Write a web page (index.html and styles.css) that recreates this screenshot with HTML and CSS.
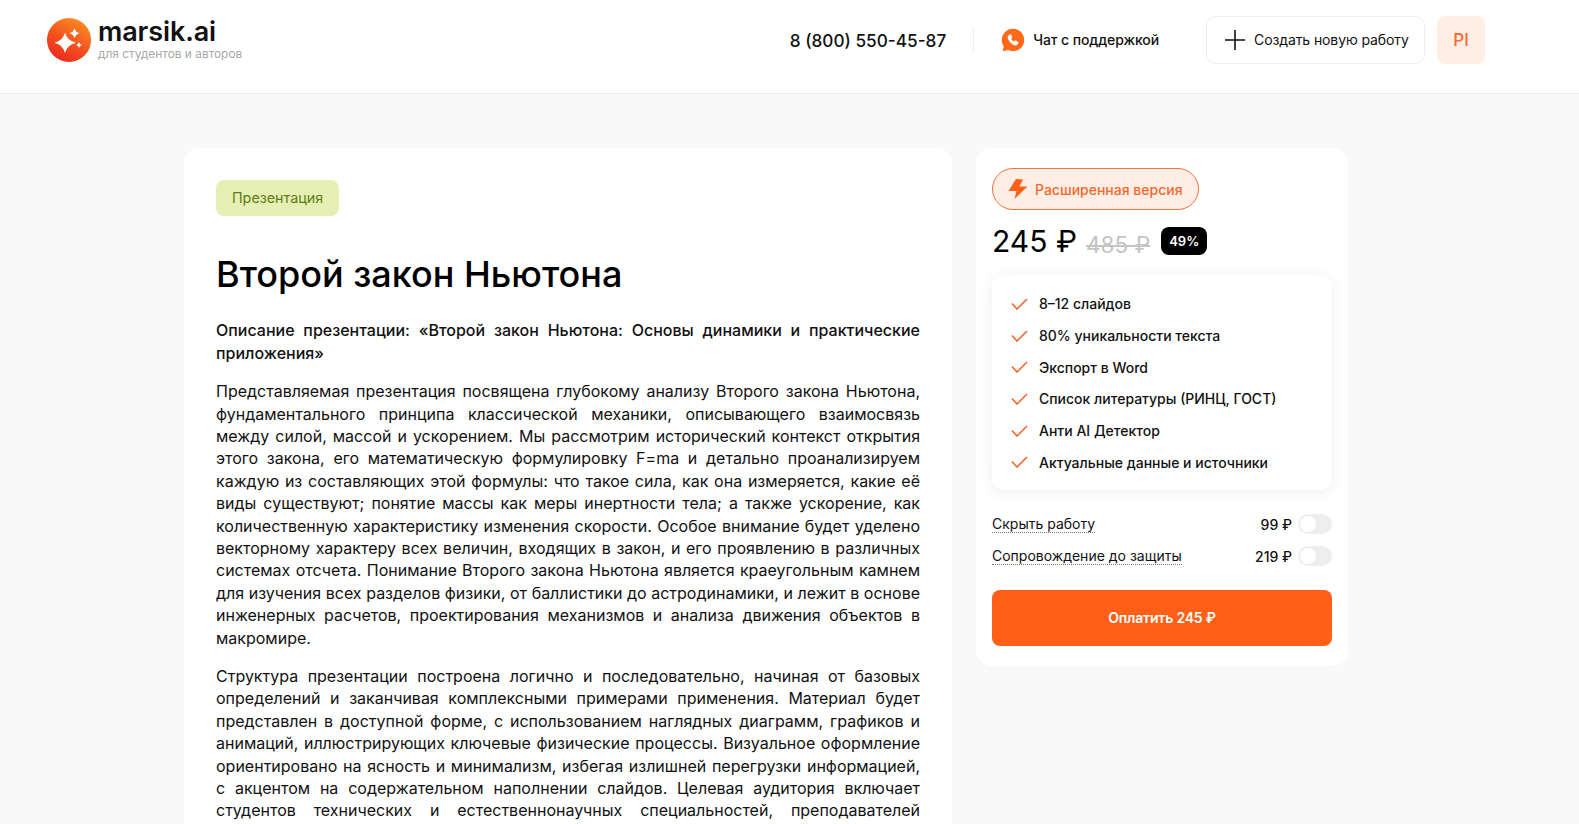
FILE: index.html
```html
<!DOCTYPE html>
<html lang="ru">
<head>
    <meta charset="UTF-8">
    <meta name="viewport" content="width=device-width, initial-scale=1.0">
    <title>Второй закон Ньютона</title>
    <link rel="stylesheet" href="styles.css">
</head>
<body>
    <!-- Header -->
    <header class="header">
        <a class="logo">
            <svg class="logo-icon" viewBox="0 0 44 44">
                <defs>
                    <linearGradient id="logoGrad" x1="0.75" y1="0.05" x2="0.25" y2="0.95">
                        <stop offset="0" stop-color="#fb8a22"/>
                        <stop offset="0.55" stop-color="#f4501f"/>
                        <stop offset="1" stop-color="#ec2a20"/>
                    </linearGradient>
                </defs>
                <circle cx="22" cy="22" r="22" fill="url(#logoGrad)"/>
                <path d="M18 14.500Q20 22.700 29 24.700Q20 26.700 18 35Q16 26.700 7.500 24.700Q16 22.700 18 14.500Z" fill="#fff"/>
                <path d="M27.500 10Q28.500 14.300 32.500 15.300Q28.500 16.300 27.500 20.500Q26.500 16.300 22.500 15.300Q26.500 14.300 27.500 10Z" fill="#fff"/>
                <path d="M32 24Q32.500 26.500 35 27Q32.500 27.500 32 30Q31.500 27.500 29 27Q31.500 26.500 32 24Z" fill="#fff"/>
            </svg>
            <div class="logo-text">
                <div class="logo-name">marsik.ai</div>
                <div class="logo-sub">для студентов и авторов</div>
            </div>
        </a>
        <div class="header-right">
            <a class="phone">8 (800) 550-45-87</a>
            <div class="divider"></div>
            <a class="support">
                <svg class="support-icon" viewBox="0 0 24 24">
                    <path d="M12 .8C5.700.8.800 5.700.800 12c0 2.300.700 4.400 1.900 6.200L1.700 23.300l5.300-1.200c1.500.700 3.200 1.100 5 1.100 6.300 0 11.200-4.900 11.200-11.200S18.300.800 12 .800Z" fill="#ff6a1a"/>
                    <path d="M9.100 6.300 7.500 7.400c-.800.600-1 1.500-.700 2.500.900 3.300 3.600 6.300 7 7.500 1 .300 1.900 0 2.500-.800l1-1.400c.300-.400.200-.900-.200-1.200l-2-1.300c-.400-.200-.800-.200-1.100.100l-.800.800c-1.300-.600-2.500-1.800-3.100-3.100l.8-.900c.300-.300.300-.700.100-1.100L10.300 6.600c-.300-.500-.800-.600-1.200-.300Z" fill="#fff"/>
                </svg>
                Чат с поддержкой
            </a>
            <a class="new-work">
                <svg class="plus-icon" viewBox="0 0 20 20"><path d="M10 0v20M0 10h20" stroke="#111" stroke-width="1.600" fill="none"/></svg>
                Создать новую работу
            </a>
            <div class="avatar">PI</div>
        </div>
    </header>

    <!-- Page -->
    <main class="page">
        <article class="work-card">
            <span class="work-type">Презентация</span>
            <h1 class="work-title">Второй закон Ньютона</h1>
            <p class="lead">Описание презентации: «Второй закон Ньютона: Основы динамики и практические приложения»</p>
            <p>Представляемая презентация посвящена глубокому анализу Второго закона Ньютона, фундаментального принципа классической механики, описывающего взаимосвязь между силой, массой и ускорением. Мы рассмотрим исторический контекст открытия этого закона, его математическую формулировку F=ma и детально проанализируем каждую из составляющих этой формулы: что такое сила, как она измеряется, какие её виды существуют; понятие массы как меры инертности тела; а также ускорение, как количественную характеристику изменения скорости. Особое внимание будет уделено векторному характеру всех величин, входящих в закон, и его проявлению в различных системах отсчета. Понимание Второго закона Ньютона является краеугольным камнем для изучения всех разделов физики, от баллистики до астродинамики, и лежит в основе инженерных расчетов, проектирования механизмов и анализа движения объектов в макромире.</p>
            <p class="cut">Структура презентации построена логично и последовательно, начиная от базовых определений и заканчивая комплексными примерами применения. Материал будет представлен в доступной форме, с использованием наглядных диаграмм, графиков и анимаций, иллюстрирующих ключевые физические процессы. Визуальное оформление ориентировано на ясность и минимализм, избегая излишней перегрузки информацией, с акцентом на содержательном наполнении слайдов. Целевая аудитория включает студентов технических и естественнонаучных специальностей, преподавателей</p>
        </article>

        <aside class="order-card">
            <div class="version">
                <svg class="bolt-icon" viewBox="0 0 20 20"><path d="M8 0 .5 12H8.500L6.500 20 19.500 7.500H11.500L15 .5Z" fill="#ff5f17"/></svg>
                Расширенная версия
            </div>
            <div class="price-row">
                <span class="price">245 ₽</span>
                <span class="price-old">485 ₽</span>
                <span class="discount">49%</span>
            </div>
            <ul class="features">
                <li><svg class="check-icon" viewBox="0 0 17 12"><path d="M1 5.500 6 11 16 1" stroke="#f4682c" stroke-width="1.600" fill="none"/></svg>8–12 слайдов</li>
                <li><svg class="check-icon" viewBox="0 0 17 12"><path d="M1 5.500 6 11 16 1" stroke="#f4682c" stroke-width="1.600" fill="none"/></svg>80% уникальности текста</li>
                <li><svg class="check-icon" viewBox="0 0 17 12"><path d="M1 5.500 6 11 16 1" stroke="#f4682c" stroke-width="1.600" fill="none"/></svg>Экспорт в Word</li>
                <li><svg class="check-icon" viewBox="0 0 17 12"><path d="M1 5.500 6 11 16 1" stroke="#f4682c" stroke-width="1.600" fill="none"/></svg>Список литературы (РИНЦ, ГОСТ)</li>
                <li><svg class="check-icon" viewBox="0 0 17 12"><path d="M1 5.500 6 11 16 1" stroke="#f4682c" stroke-width="1.600" fill="none"/></svg>Анти AI Детектор</li>
                <li><svg class="check-icon" viewBox="0 0 17 12"><path d="M1 5.500 6 11 16 1" stroke="#f4682c" stroke-width="1.600" fill="none"/></svg>Актуальные данные и источники</li>
            </ul>
            <div class="option">
                <span class="option-name">Скрыть работу</span>
                <span class="option-price">99 ₽</span>
                <span class="switch"></span>
            </div>
            <div class="option">
                <span class="option-name">Сопровождение до защиты</span>
                <span class="option-price">219 ₽</span>
                <span class="switch"></span>
            </div>
            <button class="pay-btn">Оплатить 245 ₽</button>
        </aside>
    </main>
</body>
</html>
```

FILE: styles.css
```css
* {
    margin: 0;
    padding: 0;
    box-sizing: border-box;
}

body {
    height: 100vh;
    overflow: hidden;
    background: #f9f9f9;
    font-family: 'Inter', 'Liberation Sans', sans-serif;
    color: #111;
}

/* Header */
.header {
    height: 94px;
    background: #fff;
    border-bottom: 1px solid #ebebeb;
    display: flex;
    align-items: flex-start;
    padding: 16px 94px 0 47px;
}

.logo {
    display: flex;
    align-items: center;
    gap: 7px;
    margin-top: 2px;
}

.logo-icon {
    width: 44px;
    height: 44px;
}

.logo-text {
    margin-top: -2px;
}

.logo-name {
    font-size: 27px;
    font-weight: 600;
    line-height: 28px;
    letter-spacing: -0.1px;
}

.logo-sub {
    font-size: 11.900px;
    line-height: 14px;
    margin-top: 1px;
    color: #a9a9a9;
}

.header-right {
    margin-left: auto;
    display: flex;
    align-items: center;
}

.phone {
    font-size: 17.200px;
    font-weight: 500;
}

.divider {
    width: 1px;
    height: 24px;
    background: #eee;
    margin: 0 27px;
}

.support {
    display: flex;
    align-items: center;
    gap: 8px;
    padding-bottom: 1px;
    font-size: 14px;
    font-weight: 500;
    letter-spacing: -0.1px;
}

.support-icon {
    width: 24px;
    height: 24px;
}

.new-work {
    margin-left: 47px;
    width: 219px;
    height: 48px;
    padding: 0 0 1px 18px;
    border: 1px solid #eee;
    border-radius: 10px;
    display: flex;
    align-items: center;
    gap: 9px;
    font-size: 14px;
    letter-spacing: -0.1px;
}

.plus-icon {
    width: 20px;
    height: 20px;
}

.avatar {
    margin-left: 12px;
    width: 48px;
    height: 48px;
    border-radius: 8px;
    background: #ffeee6;
    color: #ff6a2b;
    font-size: 17px;
    font-weight: 500;
    display: flex;
    align-items: center;
    justify-content: center;
}

/* Page */
.page {
    display: flex;
    align-items: flex-start;
    gap: 24px;
    padding: 54px 0 0 184px;
}

.work-card {
    width: 768px;
    flex: none;
    background: #fff;
    border-radius: 16px;
    padding: 32px;
}

.work-type {
    display: inline-block;
    height: 36px;
    line-height: 36px;
    padding: 0 16px;
    border-radius: 8px;
    background: #e6f0b4;
    color: #5f7d16;
    font-size: 14.300px;
}

.work-title {
    font-size: 36px;
    font-weight: 500;
    line-height: 44px;
    margin: 36px 0 23.300px;
    color: #000;
}

.work-card p {
    font-size: 16px;
    line-height: 22.400px;
    text-align: justify;
    margin-bottom: 16px;
}

.work-card .lead {
    font-weight: 500;
}

/* last line runs on past the fold */
.work-card .cut {
    text-align-last: justify;
}

/* Order card */
.order-card {
    width: 372px;
    flex: none;
    background: #fff;
    border-radius: 16px;
    padding: 20px 16px;
}

.version {
    display: inline-flex;
    align-items: center;
    gap: 7px;
    height: 42px;
    padding: 0 15px;
    border: 1px solid #f0733a;
    border-radius: 21px;
    background: #ffeee6;
    color: #f4682c;
    font-size: 14px;
    font-weight: 500;
}

.bolt-icon {
    width: 20px;
    height: 20px;
}

.price-row {
    display: flex;
    align-items: center;
    margin-top: 13px;
    height: 36px;
}

.price {
    font-size: 30px;
    color: #000;
}

.price-old {
    font-size: 22.500px;
    color: #c4c4c4;
    text-decoration: line-through;
    margin: 6px 11px 0 9px;
}

.discount {
    height: 28px;
    line-height: 28px;
    padding: 0 8px;
    border-radius: 8px;
    background: #000;
    color: #fff;
    font-size: 13px;
    font-weight: 600;
}

.features {
    list-style: none;
    margin-top: 16px;
    height: 215px;
    padding: 13px 19px;
    border-radius: 12px;
    box-shadow: 0 2px 16px rgba(0, 0, 0, 0.07);
}

.features li {
    height: 31.700px;
    display: flex;
    align-items: center;
    font-size: 14px;
    font-weight: 500;
    gap: 11px;
}

.check-icon {
    width: 17px;
    height: 12px;
    flex: none;
}

.option {
    display: flex;
    align-items: center;
    height: 32px;
    font-size: 14px;
}

.features + .option {
    margin-top: 18px;
}

.option-name {
    border-bottom: 1px dotted #777;
    line-height: 16px;
}

.option-price {
    margin-left: auto;
    font-weight: 500;
}

.switch {
    width: 34px;
    height: 20px;
    margin-left: 6px;
    border-radius: 10px;
    background: #eee;
    position: relative;
}

/* knob */
.switch::after {
    content: '';
    position: absolute;
    top: 2px;
    left: 2px;
    width: 16px;
    height: 16px;
    border-radius: 50%;
    background: #fff;
}

.pay-btn {
    display: block;
    width: 100%;
    height: 56px;
    margin-top: 18px;
    padding-bottom: 1px;
    border: none;
    border-radius: 8px;
    background: #ff5f17;
    color: #fff;
    font-family: inherit;
    font-size: 14px;
    font-weight: 600;
    letter-spacing: -0.2px;
}
```
